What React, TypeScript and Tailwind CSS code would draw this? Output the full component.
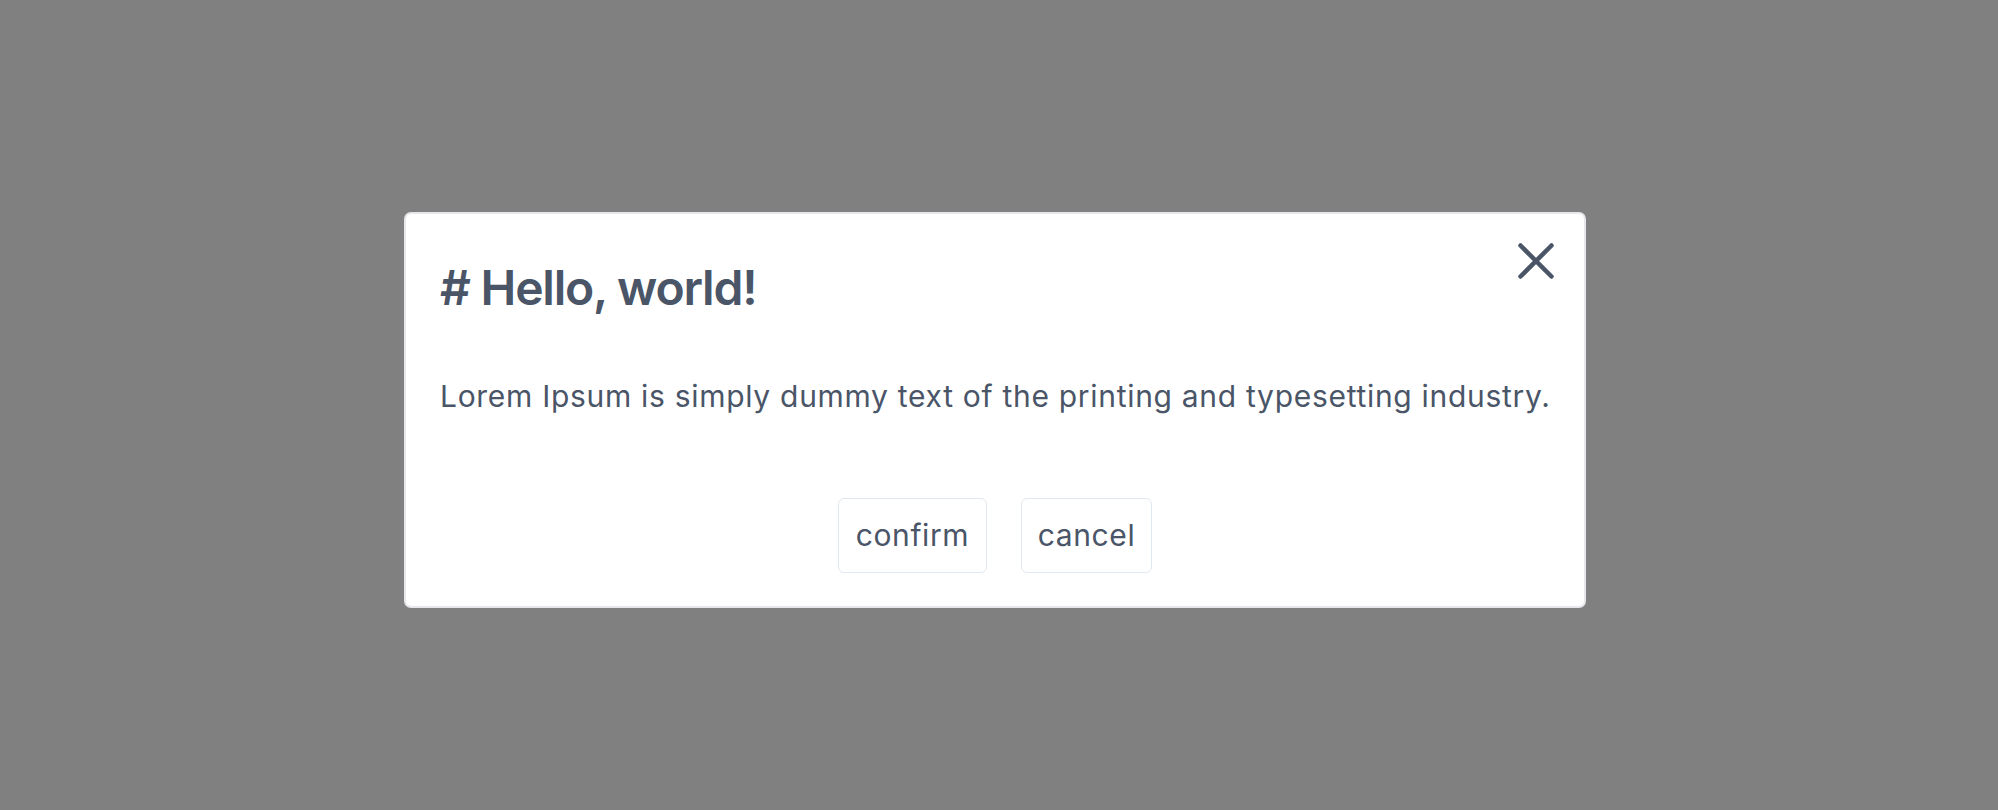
import React from "react";

export default function App() {
  return (
    <div
      className="w-full h-[810px] bg-[#808080] flex items-center justify-center pr-[8px] pt-[10px]"
      style={{ fontFamily: "Inter, 'Noto Sans', sans-serif" }}
    >
      <div className="w-[1182px] h-[396px] bg-white border-2 border-[#e5e7eb] rounded-[7px] flex flex-col px-[34px] text-[#4a5568]">
        <div className="flex justify-between items-start pt-[30px]">
          <h1 className="text-[48px] leading-[56px] font-semibold tracking-[-1.2px] mt-[16px]">
            # Hello, world!
          </h1>
          <button className="w-[36px] h-[36px] flex items-center justify-center mr-[-4px] mt-[-1px]">
            <svg width="36" height="36" viewBox="0 0 36 36" fill="none">
              <path d="M2.5 2.5 L33.5 33.5 M33.5 2.5 L2.5 33.5" stroke="#4a5568" strokeWidth="4.5" strokeLinecap="round" />
            </svg>
          </button>
        </div>
        <p className="text-[30px] leading-[40px] tracking-[0.7px] whitespace-nowrap mt-[60px]">
          Lorem Ipsum is simply dummy text of the printing and typesetting industry.
        </p>
        <div className="flex justify-center gap-[34px] mt-[82px]">
          <button className="w-[149px] h-[75px] border-[1.5px] border-[#e2e8f0] rounded-[6px] text-[30px] tracking-[0.6px] text-[#4a5568]">
            confirm
          </button>
          <button className="w-[131px] h-[75px] border-[1.5px] border-[#e2e8f0] rounded-[6px] text-[30px] tracking-[0.6px] text-[#4a5568]">
            cancel
          </button>
        </div>
      </div>
    </div>
  );
}
